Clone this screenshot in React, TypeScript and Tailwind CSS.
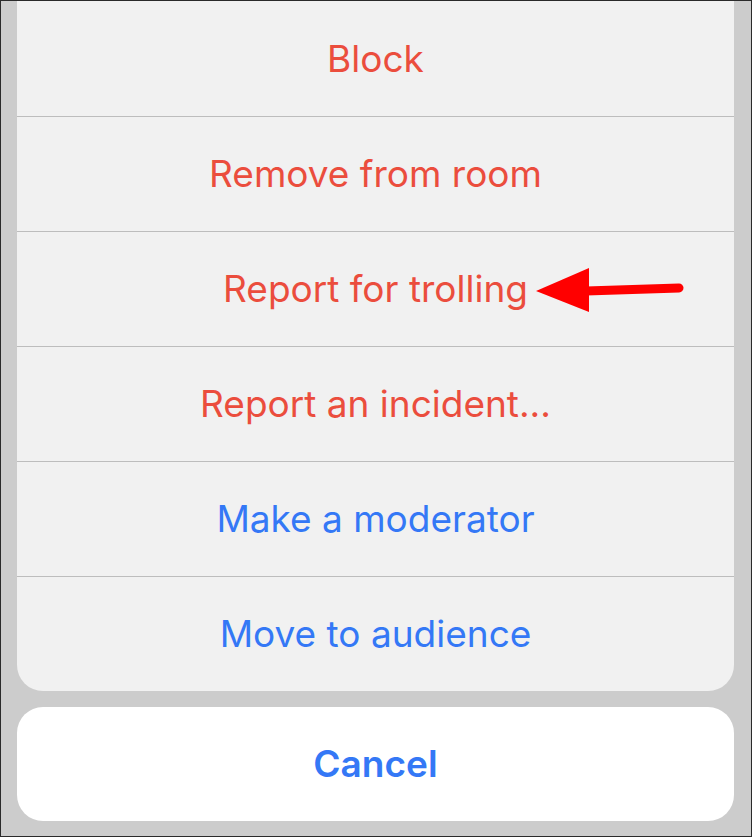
const rows = [
  { label: "Block", tone: "red" },
  { label: "Remove from room", tone: "red" },
  { label: "Report for trolling", tone: "red" },
  { label: "Report an incident...", tone: "red" },
  { label: "Make a moderator", tone: "blue" },
  { label: "Move to audience", tone: "blue" },
];

export default function App() {
  return (
    <div
      className="relative w-[752px] h-[837px] bg-[#cccccc] border border-[#2a2a2a] pl-4 pr-[17px] flex flex-col"
      style={{ fontFamily: "Inter, 'Noto Sans', sans-serif" }}
    >
      <div className="bg-[#f1f1f1] rounded-b-[26px] overflow-hidden">
        {rows.map((row, i) => (
          <div
            key={row.label}
            className={
              (i === 0 ? "h-[115px] " : "h-[115px] border-t border-[#bdbdbd] ") +
              "flex items-center justify-center text-[37px] " +
              (row.tone === "red" ? "text-[#eb4d3d]" : "text-[#3478f6]")
            }
          >
            {row.label}
          </div>
        ))}
      </div>
      <div className="mt-4 h-[114px] bg-white rounded-[26px] flex items-center justify-center text-[37px] font-semibold text-[#3478f6]">
        Cancel
      </div>

      {/* red annotation arrow */}
      <svg
        className="absolute left-[533px] top-[265px]"
        width="160"
        height="50"
        viewBox="0 0 160 50"
      >
        <line x1="52" y1="25" x2="145" y2="22" stroke="#ff0000" strokeWidth="9" strokeLinecap="round" />
        <polygon points="2,25 55,2 55,46" fill="#ff0000" />
      </svg>
    </div>
  );
}
